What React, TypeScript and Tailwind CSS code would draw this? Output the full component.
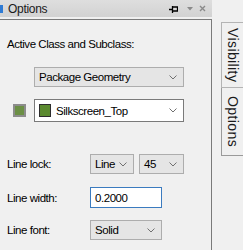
import React from "react";

const font = "font-['Liberation_Sans',Arial,sans-serif]";

function Chevron() {
  return (
    <svg width="8" height="5" viewBox="0 0 8 5" className="shrink-0">
      <path d="M0.5 0.5 L4 4 L7.5 0.5" fill="none" stroke="#707070" strokeWidth="1" />
    </svg>
  );
}

interface SelectProps {
  text: string;
  w: string;
  white?: boolean;
  swatch?: boolean;
}

const Select: React.FC<SelectProps> = ({ text, w, white, swatch }) => {
  return (
    <div
      className={`${w} flex items-center justify-between pl-[4px] pr-[6px] border ${
        white ? "h-[23px] bg-white border-[#7a7a7a]" : "h-[20px] bg-[#e5e5e5] border-[#adadad]"
      }`}
    >
      <div className="flex items-center gap-[5px]">
        {swatch && <div className="w-[12px] h-[13px] bg-[#5b8a2f] border border-[#2d2d2d]" />}
        <span className="text-[11.5px] tracking-[-0.45px] leading-[14px] text-black">{text}</span>
      </div>
      <Chevron />
    </div>
  );
};

export default function App() {
  return (
    <div className={`w-[243px] h-[250px] bg-[#f0f0f0] flex overflow-hidden ${font}`}>
      {/* Options panel */}
      <div className="w-[213px] flex flex-col">
        {/* Title bar */}
        <div className="h-[17px] bg-gradient-to-b from-[#dedede] to-[#d2d2d2] flex items-center">
          <div className="w-[3px] h-[8px] bg-[#2f7bd4]" />
          <span className="ml-[5px] text-[12px] tracking-[-0.3px] text-[#1a1a1a]">Options</span>
          <div className="ml-auto flex items-center mr-[6px]">
            <svg width="9" height="8" viewBox="0 0 9 8">
              <path d="M0 4.5 H3.5 M3.5 1 V8 M3.5 2 H8.5 V6 H3.5" fill="none" stroke="#000" strokeWidth="1.3" />
            </svg>
            <svg width="6" height="4" viewBox="0 0 6 4" className="ml-[9px]">
              <path d="M0 0 H6 L3 3.5 Z" fill="#8a8a8a" />
            </svg>
            <svg width="7" height="7" viewBox="0 0 7 7" className="ml-[6px]">
              <path d="M1 1 L6 6 M6 1 L1 6" stroke="#8a8a8a" strokeWidth="1.4" />
            </svg>
          </div>
        </div>
        <div className="h-[2px]" />

        {/* Body */}
        <div className="flex-1 border-t border-r border-[#7a7a7a] pl-[7px] text-[11.5px] tracking-[-0.45px] leading-[14px] text-black">
          <div className="mt-[17px]">Active Class and Subclass:</div>

          <div className="mt-[16px] ml-[27px]">
            <Select text="Package Geometry" w="w-[150px]" />
          </div>

          <div className="mt-[12px] flex items-center">
            <div className="ml-[6px] w-[13px] h-[13px] border-2 border-[#8c8c8c] bg-[#6b8f45]" />
            <div className="ml-[8px]">
              <Select text="Silkscreen_Top" w="w-[150px]" white swatch />
            </div>
          </div>

          <div className="mt-[32px] flex items-center">
            <span className="w-[83px]">Line lock:</span>
            <Select text="Line" w="w-[44px]" />
            <div className="ml-[5px]">
              <Select text="45" w="w-[45px]" />
            </div>
          </div>

          <div className="mt-[13px] flex items-center">
            <span className="w-[83px]">Line width:</span>
            <div className="w-[72px] h-[21px] bg-white border border-[#3b7bbf] flex items-center pl-[4px]">
              0.2000
            </div>
          </div>

          <div className="mt-[12px] flex items-center">
            <span className="w-[83px]">Line font:</span>
            <Select text="Solid" w="w-[72px]" />
          </div>
        </div>
      </div>

      {/* Side tabs */}
      <div className="flex-1 flex flex-col pt-[22px] pl-[9px]">
        <div className="h-[66px] border border-r-0 border-[#b4b4b4] bg-[#f0f0f0] flex items-center justify-center">
          <span className="[writing-mode:vertical-rl] text-[14px] text-[#1a1a1a] tracking-[0.4px]">Visibility</span>
        </div>
        <div className="h-[68px] border border-t-0 border-r-0 border-[#9a9a9a] bg-[#f0f0f0] flex items-center justify-center">
          <span className="[writing-mode:vertical-rl] text-[14px] text-[#1a1a1a] tracking-[0.4px]">Options</span>
        </div>
      </div>
    </div>
  );
}
